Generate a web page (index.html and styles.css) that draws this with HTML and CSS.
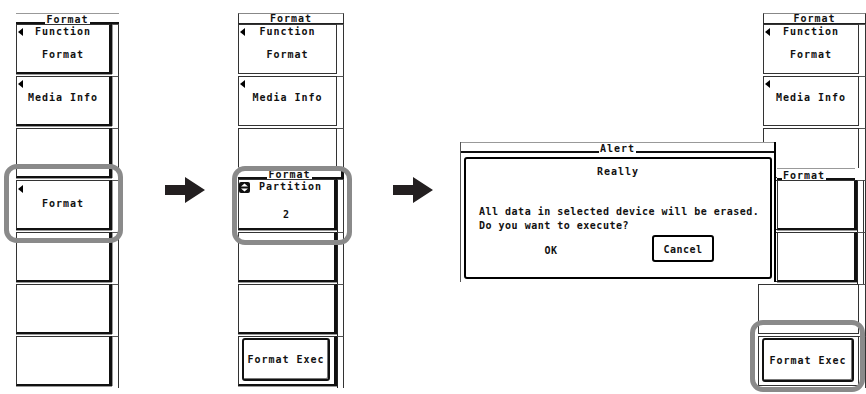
FILE: index.html
```html
<!DOCTYPE html>
<html lang="en">
<head>
    <meta charset="UTF-8">
    <title>Format</title>
    <link rel="stylesheet" href="styles.css">
</head>
<body>
<div class="canvas">

    <!-- step 1 -->
    <div class="panel p1">
        <div class="row head legend"><span>Format</span></div>
        <div class="row"><div class="key raised">
            <div class="ln"><i class="tri"></i><span>Function</span></div>
            <div class="ln val">Format</div>
        </div><div class="side"></div></div>
        <div class="row"><div class="key raised">
            <div class="ln"><i class="tri"></i></div>
            <div class="ln lbl">Media Info</div>
        </div><div class="side"></div></div>
        <div class="row"><div class="key raised"></div><div class="side"></div></div>
        <div class="row"><div class="key raised k-fmt">
            <div class="ln tri-ln"><i class="tri"></i></div>
            <div class="ln">Format</div>
        </div><div class="side"></div></div>
        <div class="row"><div class="key raised"></div><div class="side"></div></div>
        <div class="row"><div class="key raised"></div><div class="side"></div></div>
        <div class="row"><div class="key raised"></div><div class="side"></div></div>
    </div>

    <svg class="arrow a1" width="40" height="26" viewBox="0 0 40 26"><path d="M0 8H20V0L40 13L20 26V18H0Z"/></svg>

    <!-- step 2 -->
    <div class="panel p2">
        <div class="row head plain"><span>Format</span></div>
        <div class="row"><div class="key">
            <div class="ln"><i class="tri"></i><span>Function</span></div>
            <div class="ln val">Format</div>
        </div><div class="side"></div></div>
        <div class="row"><div class="key">
            <div class="ln"><i class="tri"></i></div>
            <div class="ln lbl">Media Info</div>
        </div><div class="side"></div></div>
        <div class="row short"><div class="key"></div><div class="side"></div></div>
        <div class="row pophead legend"><span>Format</span></div>
        <div class="row tall"><div class="key raised">
            <div class="ln"><svg class="updn" width="11" height="11" viewBox="0 0 11 11"><rect width="11" height="11" rx="2"/><path d="M5.5 1.5L9 4.5H2Z M5.5 9.5L9 6.5H2Z" fill="#fff"/></svg><span>Partition</span></div>
            <div class="ln part">2</div>
        </div><div class="side dark"></div></div>
        <div class="row"><div class="key raised"></div><div class="side dark"></div></div>
        <div class="row"><div class="key raised"></div><div class="side dark"></div></div>
        <div class="row"><div class="key raised exec"><div class="btn">Format Exec</div></div><div class="side dark"></div></div>
    </div>

    <svg class="arrow a2" width="40" height="26" viewBox="0 0 40 26"><path d="M0 8H20V0L40 13L20 26V18H0Z"/></svg>

    <!-- step 3 -->
    <div class="panel p3">
        <div class="row head plain"><span>Format</span></div>
        <div class="row"><div class="key">
            <div class="ln"><i class="tri"></i><span>Function</span></div>
            <div class="ln val">Format</div>
        </div><div class="side"></div></div>
        <div class="row"><div class="key">
            <div class="ln"><i class="tri"></i></div>
            <div class="ln lbl">Media Info</div>
        </div><div class="side"></div></div>
        <div class="row"><div class="key"></div><div class="side"></div></div>
        <div class="row"><div class="key"></div><div class="side"></div></div>
        <div class="row"><div class="key"></div><div class="side"></div></div>
        <div class="row shift"><div class="key"></div><div class="side"></div></div>
        <div class="row shift"><div class="key exec"><div class="btn">Format Exec</div></div><div class="side"></div></div>
    </div>

    <div class="popup">
        <div class="row pophead legend left"><span>Format</span></div>
        <div class="row"><div class="key raised"></div><div class="side dark"></div></div>
        <div class="row"><div class="key raised"></div><div class="side dark"></div></div>
    </div>

    <div class="dialog">
        <div class="title legend"><span>Alert</span></div>
        <div class="dbody">
            <p class="really">Really</p>
            <p class="msg">All data in selected device will be erased.<br>Do you want to execute?</p>
            <div class="btns">
                <span class="ok">OK</span>
                <span class="cancel">Cancel</span>
            </div>
        </div>
    </div>

    <div class="mark m1"></div>
    <div class="mark m2"></div>
    <div class="mark m3"></div>
</div>
</body>
</html>
```

FILE: styles.css
```css
body {
    margin: 0;
    background: #fff;
}
.canvas {
    position: relative;
    width: 866px;
    height: 394px;
    overflow: hidden;
    font: bold 10px "DejaVu Sans Mono", monospace;
    letter-spacing: 1px;
    color: #111;
}

/* soft key columns */
.panel {
    position: absolute;
    top: 13px;
    display: flex;
    flex-direction: column;
}
.p1 { left: 16px; width: 103px; }
.p2 { left: 238px; width: 106px; }
.p3 { left: 763px; width: 103px; }

.row {
    display: flex;
    height: 52px;
    flex: none;
}
.row.short { height: 39px; }
.row.tall { height: 53px; }
.row.shift { margin-left: -5px; }

.key {
    box-sizing: border-box;
    flex: 1;
    height: 50px;
    border: 1px solid #333;
    background: #fff;
    display: flex;
    flex-direction: column;
}
.short .key { height: 39px; border-bottom: none; }
.tall .key { height: 51px; }
.key.raised {
    border-right: 3px solid #111;
    border-bottom: 2px solid #111;
    box-shadow: 0 1px 0 #999, 1px 0 0 #999;
}
.side {
    width: 6px;
    border-right: 1px solid #333;
    border-top: 1px solid #555;
}
.side.dark { border-left: 1px solid #222; width: 5px; }

.head {
    height: 11px;
    box-sizing: border-box;
    align-items: flex-end;
    justify-content: center;
}
.head span { line-height: 10px; }
.head.plain {
    border-top: 1px solid #888;
    border-bottom: 1px solid #222;
    border-right: 1px solid #333;
    border-left: 1px solid #333;
    align-items: center;
}

.legend {
    display: flex;
    align-items: flex-end;
    border-top: 1px solid #999;
}
.legend::before,
.legend::after {
    content: '';
    flex: 1;
    border-bottom: 2px solid #111;
}
.legend span {
    line-height: 9px;
    padding: 0 1px;
}
.legend.left::before { flex: none; width: 5px; }

.pophead {
    height: 12px;
    box-sizing: border-box;
    border-right: 3px solid #111;
}

.ln {
    display: grid;
    grid-template-columns: 9px 1fr 9px;
    align-items: center;
    height: 12px;
    line-height: 12px;
    text-align: center;
}
.ln:first-child { margin-top: 1px; }
.ln.val { margin-top: 11px; }
.ln.lbl { margin-top: 2px; }
.ln.part { margin-top: 16px; }
.ln:not(:has(.tri)):not(:has(.updn))::before { content: ''; }
.k-fmt .tri-ln { margin-top: 4px; height: 8px; }
.k-fmt .ln + .ln { margin-top: 5px; }

.tri {
    justify-self: start;
    margin-left: 1px;
    width: 0;
    height: 0;
    border-top: 4px solid transparent;
    border-bottom: 4px solid transparent;
    border-right: 5px solid #000;
}
.updn {
    display: block;
    fill: #111;
}
.tall .ln:first-child {
    grid-template-columns: 14px 1fr 6px;
    margin-top: 1px;
}

.exec {
    padding: 1px 4px 3px 3px;
}
.btn {
    flex: 1;
    display: flex;
    align-items: center;
    justify-content: center;
    border: 2px solid #111;
    border-radius: 3px;
    box-shadow: inset -1px -1px 0 #777;
}

.arrow {
    position: absolute;
    top: 177px;
    fill: #231f20;
}
.a1 { left: 165px; }
.a2 { left: 393px; }

/* popup menu in step 3 */
.popup {
    position: absolute;
    left: 777px;
    top: 168px;
    width: 87px;
    display: flex;
    flex-direction: column;
    background: #fff;
    z-index: 2;
}
.popup .pophead { border-right: none; margin-right: 9px; }

/* alert */
.dialog {
    position: absolute;
    left: 460px;
    top: 142px;
    width: 316px;
    height: 140px;
    box-sizing: border-box;
    background: #fff;
    border-left: 1px solid #555;
    border-right: 2px solid #000;
    z-index: 3;
    letter-spacing: 0.5px;
}
.title {
    height: 11px;
    box-sizing: border-box;
    letter-spacing: 1px;
}
.dbody {
    margin: 4px 2px 0 3px;
    height: 122px;
    box-sizing: border-box;
    border: 2px solid #000;
    border-radius: 3px;
}
.dbody p {
    margin: 0;
}
.really {
    margin-top: 7px !important;
    line-height: 12px;
    text-align: center;
    letter-spacing: 1px;
}
.msg {
    margin-top: 27px !important;
    padding-left: 13px;
    line-height: 14px;
}
.btns {
    display: flex;
    align-items: center;
    height: 27px;
    margin-top: 2px;
}
.ok {
    width: 62px;
    margin-left: 54px;
    padding-top: 4px;
    text-align: center;
}
.cancel {
    box-sizing: border-box;
    width: 62px;
    height: 27px;
    margin-left: 70px;
    padding-top: 2px;
    display: flex;
    align-items: center;
    justify-content: center;
    border: 2px solid #000;
    border-radius: 3px;
}

/* grey highlight frames */
.mark {
    position: absolute;
    box-sizing: border-box;
    border: 5px solid #8a8a8a;
    border-radius: 13px;
    z-index: 5;
}
.m1 { left: 4px; top: 164px; width: 119px; height: 79px; }
.m2 { left: 232px; top: 166px; width: 120px; height: 79px; }
.m3 { left: 750px; top: 320px; width: 115px; height: 72px; }
```
